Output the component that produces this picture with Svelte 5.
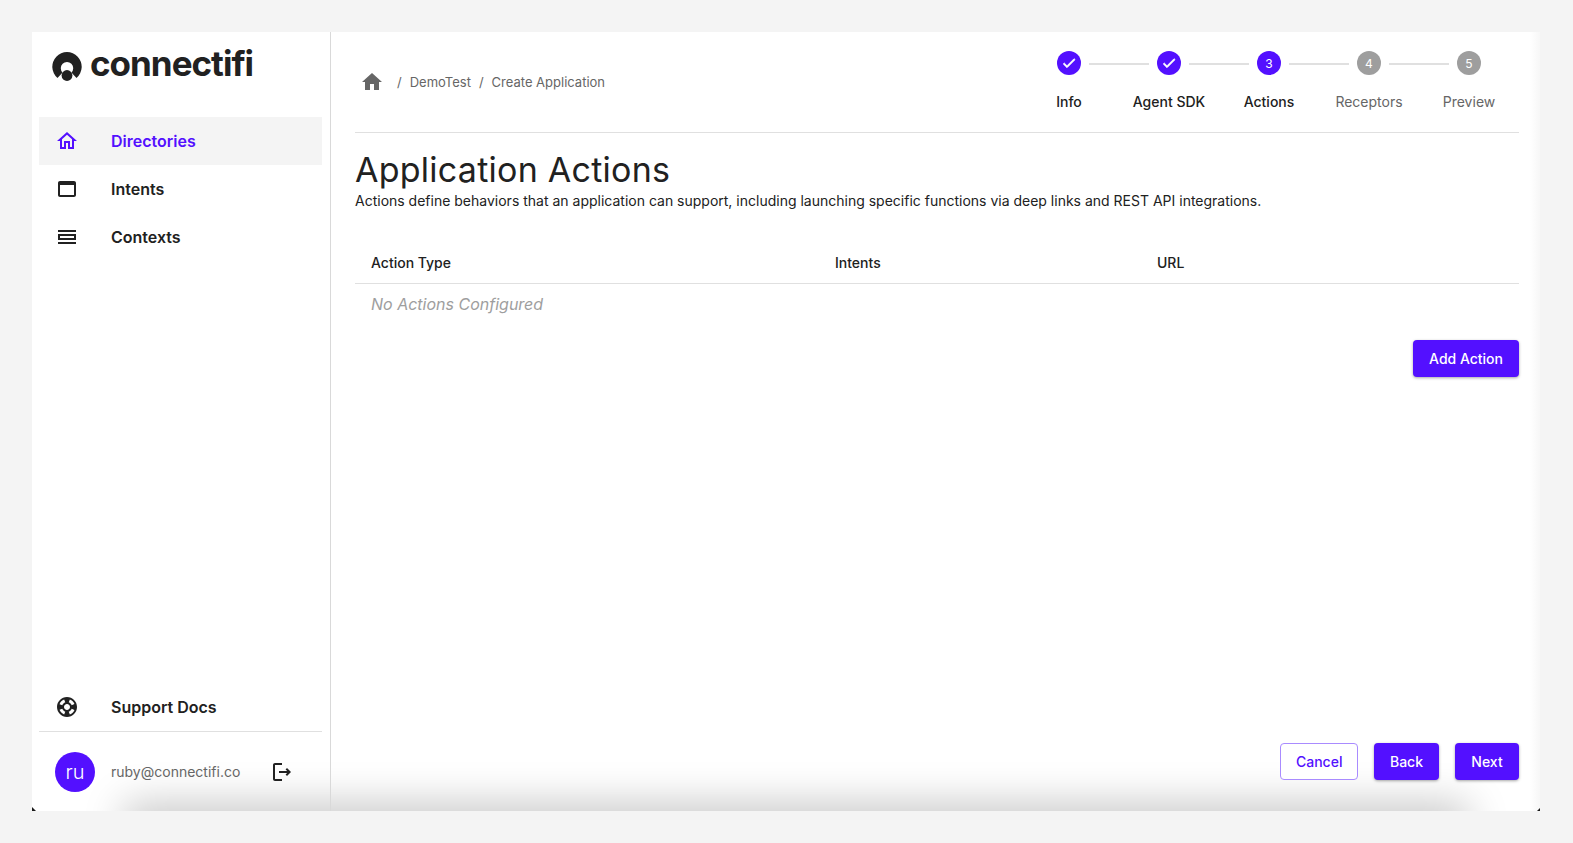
<script>
  const nav = [
    { label: 'Directories', icon: 'home', active: true },
    { label: 'Intents', icon: 'window' },
    { label: 'Contexts', icon: 'rows' }
  ];
  const steps = [
    { label: 'Info', done: true, on: true },
    { label: 'Agent SDK', done: true, on: true },
    { label: 'Actions', on: true },
    { label: 'Receptors' },
    { label: 'Preview' }
  ];
</script>

<div class="page">
  <div class="card">
    <div class="glow"></div>
    <div class="edge"></div>
    <span class="corner left"></span>
    <span class="corner right"></span>
    <aside class="side">
      <div class="logo">
        <svg width="30" height="30" viewBox="0 0 30 30">
          <path d="M5.500 27 A14.700 14.700 0 1 1 24.500 27 L19.400 21.500 A6.200 6.200 0 1 0 10.600 21.500 Z" fill="#212121"/>
          <circle cx="15" cy="24.500" r="5.400" fill="#212121"/>
        </svg>
        <span>connectifi</span>
      </div>
      <nav>
        {#each nav as item}
          <div class="nav-item" class:active={item.active}>
            <span class="nav-icon">
              {#if item.icon === 'home'}
                <svg width="24" height="24" viewBox="0 0 24 24"><path d="M12 5.690l5 4.500V18h-2v-6H9v6H7v-7.810l5-4.500M12 3L2 12h3v8h6v-6h2v6h6v-8h3L12 3z" fill="currentColor"/></svg>
              {:else if item.icon === 'window'}
                <svg width="24" height="24" viewBox="0 0 24 24"><path d="M19 4H5c-1.110 0-2 .9-2 2v12c0 1.100.89 2 2 2h14c1.100 0 2-.9 2-2V6c0-1.100-.89-2-2-2zm0 14H5V8h14v10z" fill="currentColor"/></svg>
              {:else}
                <svg width="24" height="24" viewBox="0 0 24 24"><path d="M3 5h18v2H3zM3 17h18v2H3zM3 9h18v6H3zM5 11v2h14v-2z" fill="currentColor" fill-rule="evenodd"/></svg>
              {/if}
            </span>
            <span>{item.label}</span>
          </div>
        {/each}
      </nav>
      <div class="nav-item support">
        <span class="nav-icon">
          <svg width="24" height="24" viewBox="0 0 24 24"><path d="M12 2C6.480 2 2 6.480 2 12s4.480 10 10 10 10-4.480 10-10S17.520 2 12 2zm7.460 7.120l-2.780 1.150c-.51-1.360-1.580-2.440-2.950-2.940l1.150-2.780c2.100.8 3.770 2.470 4.580 4.570zM12 15c-1.660 0-3-1.340-3-3s1.340-3 3-3 3 1.340 3 3-1.340 3-3 3zM9.130 4.540l1.170 2.780c-1.380.5-2.470 1.590-2.980 2.970L4.540 9.130c.81-2.110 2.480-3.780 4.590-4.590zM4.540 14.870l2.780-1.150c.51 1.380 1.590 2.460 2.970 2.960l-1.170 2.780c-2.100-.81-3.770-2.480-4.580-4.590zm10.340 4.590l-1.150-2.780c1.370-.51 2.450-1.590 2.950-2.970l2.780 1.170c-.81 2.100-2.480 3.770-4.580 4.580z" fill="currentColor"/></svg>
        </span>
        <span>Support Docs</span>
      </div>
      <div class="user">
        <div class="avatar">ru</div>
        <span class="email">ruby@connectifi.co</span>
        <svg class="logout" width="24" height="24" viewBox="0 0 24 24"><path d="M17 8l-1.410 1.410L17.170 11H9v2h8.170l-1.580 1.580L17 16l4-4zM5 5h7V3H5c-1.100 0-2 .9-2 2v14c0 1.100.9 2 2 2h7v-2H5z" fill="#212121"/></svg>
      </div>
    </aside>

    <main class="main">
      <header class="top">
        <div class="crumbs">
          <svg width="24" height="24" viewBox="0 0 24 24"><path d="M10 20v-6h4v6h5v-8h3L12 3 2 12h3v8z" fill="#666"/></svg>
          <span class="sep first">/</span>
          <span>DemoTest</span>
          <span class="sep">/</span>
          <span>Create Application</span>
        </div>
        <div class="stepper">
          {#each steps as step, i}
            <div class="step">
              {#if i > 0}<span class="line"></span>{/if}
              <span class="dot" class:on={step.on}>
                {#if step.done}
                  <svg width="16" height="16" viewBox="0 0 24 24"><path d="M9 16.170L4.830 12l-1.420 1.410L9 19 21 7l-1.410-1.410z" fill="#fff" stroke="#fff" stroke-width="1.200"/></svg>
                {:else}
                  {i + 1}
                {/if}
              </span>
              <span class="step-label" class:on={step.on}>{step.label}</span>
            </div>
          {/each}
        </div>
      </header>

      <h1>Application Actions</h1>
      <p class="desc">Actions define behaviors that an application can support, including launching specific functions via deep links and REST API integrations.</p>

      <div class="table">
        <div class="thead">
          <span class="col-type">Action Type</span>
          <span class="col-intents">Intents</span>
          <span>URL</span>
        </div>
        <div class="empty">No Actions Configured</div>
      </div>

      <div class="add-row">
        <button class="btn">Add Action</button>
      </div>

      <div class="footer">
        <button class="btn outline">Cancel</button>
        <button class="btn">Back</button>
        <button class="btn">Next</button>
      </div>
    </main>
  </div>
</div>

<style>
  :global(body) {
    margin: 0;
    background: #f4f4f4;
    font-family: Inter, "Liberation Sans", sans-serif;
    color: #212121;
  }
  .page {
    height: 843px;
    padding: 32px 33px 32px 32px;
    box-sizing: border-box;
  }
  .card {
    position: relative;
    display: flex;
    height: 779px;
    background: #fff;
    overflow: hidden;
  }
  .glow {
    position: absolute;
    left: 100px;
    right: 80px;
    bottom: -30px;
    height: 30px;
    box-shadow: 0 0 40px 8px rgba(0, 0, 0, 0.22);
  }
  .edge {
    position: absolute;
    top: 0;
    right: 0;
    bottom: 0;
    width: 10px;
    background: linear-gradient(to right, #fff, #f7f7f7);
  }
  .corner {
    position: absolute;
    bottom: 0;
    width: 4px;
    height: 4px;
    background: #1a1a1a;
  }
  .corner.left { left: 0; clip-path: polygon(0 0, 100% 100%, 0 100%); }
  .corner.right { right: 0; width: 3px; height: 3px; clip-path: polygon(100% 0, 100% 100%, 0 100%); }
  .side {
    position: relative;
    flex: none;
    display: flex;
    flex-direction: column;
    border-right: 1px solid #d9d9d9;
    padding: 0 8px 0 7px;
    width: 283px;
  }
  .logo {
    display: flex;
    align-items: flex-start;
    gap: 8px;
    height: 85px;
    box-sizing: border-box;
    padding: 19px 0 0 13px;
    font-size: 35px;
    font-weight: 700;
    letter-spacing: -1px;
    color: #212121;
  }
  .logo span { margin-top: -9px; }
  nav { flex: 1; }
  .nav-item {
    display: flex;
    align-items: center;
    height: 48px;
    font-size: 16px;
    font-weight: 600;
    color: #212121;
  }
  .nav-item.active {
    background: #f4f4f4;
    color: #5310ff;
  }
  .nav-icon {
    display: flex;
    width: 72px;
    padding-left: 16px;
    box-sizing: border-box;
  }
  .support { border-bottom: 1px solid #e0e0e0; height: 49px; }
  .user {
    display: flex;
    align-items: center;
    height: 79px;
    padding: 0 0 0 16px;
  }
  .avatar {
    width: 40px;
    height: 40px;
    border-radius: 50%;
    background: #5310ff;
    color: #fff;
    font-size: 20px;
    font-weight: 300;
    display: flex;
    align-items: center;
    justify-content: center;
    flex: none;
  }
  .email {
    margin-left: 16px;
    font-size: 14px;
    color: #666;
    width: 159px;
    flex: none;
  }
  .main {
    position: relative;
    flex: 1;
    padding: 0 21px 0 24px;
    min-width: 0;
  }
  .top {
    display: flex;
    justify-content: space-between;
    height: 100px;
    border-bottom: 1px solid #e0e0e0;
  }
  .crumbs {
    display: flex;
    align-items: center;
    height: 100px;
    font-size: 13px;
    color: #666;
    padding-left: 5px;
    box-sizing: border-box;
  }
  .sep { margin: 0 8px; }
  .sep.first { margin-left: 13px; }
  .stepper { display: flex; }
  .step {
    position: relative;
    width: 100px;
    display: flex;
    flex-direction: column;
    align-items: center;
    padding-top: 19px;
  }
  .line {
    position: absolute;
    top: 31px;
    left: -30px;
    width: 60px;
    height: 2px;
    background: #e0e0e0;
  }
  .dot {
    width: 24px;
    height: 24px;
    border-radius: 50%;
    background: #9e9e9e;
    color: #fff;
    font-size: 12px;
    display: flex;
    align-items: center;
    justify-content: center;
  }
  .dot.on { background: #5310ff; }
  .step-label {
    margin-top: 17px;
    font-size: 14px;
    line-height: 20px;
    color: #666;
    white-space: nowrap;
  }
  .step-label.on { color: #212121; font-weight: 450; }
  h1 {
    margin: 16px 0 1px;
    font-size: 34px;
    font-weight: 400;
    line-height: 41px;
    letter-spacing: 0.25px;
    color: #212121;
  }
  .desc {
    margin: 0;
    font-size: 14px;
    line-height: 20px;
  }
  .table { margin-top: 32px; }
  .thead {
    display: flex;
    height: 41px;
    box-sizing: border-box;
    align-items: center;
    padding: 0 0 1px 16px;
    font-size: 14px;
    font-weight: 450;
    border-bottom: 1px solid #e0e0e0;
  }
  .col-type { width: 464px; }
  .col-intents { width: 322px; }
  .empty {
    font-size: 16px;
    font-style: italic;
    color: #9e9e9e;
    padding-left: 16px;
    line-height: 40px;
  }
  .add-row {
    display: flex;
    justify-content: flex-end;
    margin-top: 16px;
  }
  .btn {
    height: 37px;
    min-width: 64px;
    padding: 0 16px 1px;
    border: none;
    border-radius: 4px;
    background: #5310ff;
    color: #fff;
    font: 450 14px Inter, "Liberation Sans", sans-serif;
    box-shadow: 0 1px 3px rgba(0, 0, 0, 0.35);
  }
  .btn.outline {
    padding: 0 14.500px 1px;
    background: #fff;
    color: #5310ff;
    border: 1px solid #a98bff;
    box-shadow: none;
  }
  .footer {
    position: absolute;
    right: 21px;
    bottom: 31px;
    display: flex;
    gap: 16px;
  }
</style>
